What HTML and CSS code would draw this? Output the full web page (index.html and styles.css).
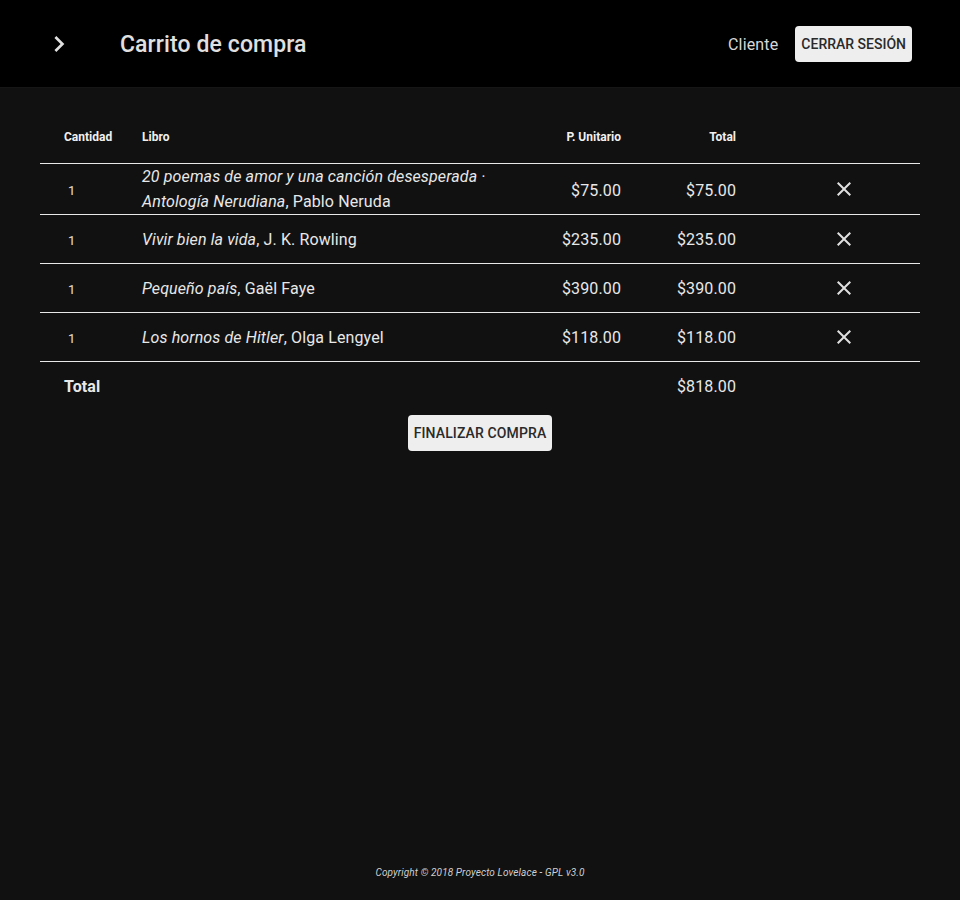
FILE: index.html
```html
<!DOCTYPE html>
<html lang="es">
<head>
<meta charset="utf-8">
<title>Carrito de compra</title>
<link rel="stylesheet" href="styles.css">
</head>
<body>
<header class="appbar">
  <span class="menu-icon">
    <svg viewBox="0 0 24 24" width="32" height="32"><path fill="#e0e0e0" d="M10 6L8.59 7.41 13.17 12l-4.58 4.59L10 18l6-6z"/></svg>
  </span>
  <h1 class="title">Carrito de compra</h1>
  <span class="user">Cliente</span>
  <button class="btn">CERRAR SESIÓN</button>
</header>
<main class="content">
  <table class="cart">
    <colgroup>
      <col class="c-qty"><col class="c-book"><col class="c-unit"><col class="c-total"><col class="c-del">
    </colgroup>
    <thead>
      <tr><th>Cantidad</th><th>Libro</th><th class="num">P. Unitario</th><th class="num">Total</th><th></th></tr>
    </thead>
    <tbody>
      <tr class="first"><td class="qty">1</td><td class="book"><i>20 poemas de amor y una canción desesperada · Antología Nerudiana</i>, Pablo Neruda</td><td class="num">$75.00</td><td class="num">$75.00</td><td class="del"><svg viewBox="0 0 24 24" width="24" height="24"><path fill="#e0e0e0" d="M19 6.41L17.59 5 12 10.59 6.41 5 5 6.41 10.59 12 5 17.59 6.41 19 12 13.41 17.59 19 19 17.59 13.41 12z"/></svg></td></tr>
      <tr><td class="qty">1</td><td class="book"><i>Vivir bien la vida</i>, J. K. Rowling</td><td class="num">$235.00</td><td class="num">$235.00</td><td class="del"><svg viewBox="0 0 24 24" width="24" height="24"><path fill="#e0e0e0" d="M19 6.41L17.59 5 12 10.59 6.41 5 5 6.41 10.59 12 5 17.59 6.41 19 12 13.41 17.59 19 19 17.59 13.41 12z"/></svg></td></tr>
      <tr><td class="qty">1</td><td class="book"><i>Pequeño país</i>, Gaël Faye</td><td class="num">$390.00</td><td class="num">$390.00</td><td class="del"><svg viewBox="0 0 24 24" width="24" height="24"><path fill="#e0e0e0" d="M19 6.41L17.59 5 12 10.59 6.41 5 5 6.41 10.59 12 5 17.59 6.41 19 12 13.41 17.59 19 19 17.59 13.41 12z"/></svg></td></tr>
      <tr><td class="qty">1</td><td class="book"><i>Los hornos de Hitler</i>, Olga Lengyel</td><td class="num">$118.00</td><td class="num">$118.00</td><td class="del"><svg viewBox="0 0 24 24" width="24" height="24"><path fill="#e0e0e0" d="M19 6.41L17.59 5 12 10.59 6.41 5 5 6.41 10.59 12 5 17.59 6.41 19 12 13.41 17.59 19 19 17.59 13.41 12z"/></svg></td></tr>
      <tr class="sum"><td class="sum-label">Total</td><td></td><td></td><td class="num">$818.00</td><td></td></tr>
    </tbody>
  </table>
  <div class="actions"><button class="btn btn-wide">FINALIZAR COMPRA</button></div>
</main>
<footer class="footer">Copyright © 2018 Proyecto Lovelace - GPL v3.0</footer>
</body>
</html>
```
FILE: styles.css
```css
* { box-sizing: border-box; }
html, body { margin: 0; padding: 0; }
body {
  background: #111111;
  color: #e6e6e6;
  font-family: Roboto, "Noto Sans", sans-serif;
  height: 900px;
  display: flex;
  flex-direction: column;
}
.appbar {
  background: #000;
  height: 88px;
  flex: none;
  display: flex;
  align-items: center;
  padding: 1px 48px 0 43px;
  border-bottom: 1px solid #161616;
}
.menu-icon { display: flex; width: 32px; height: 32px; }
.title {
  margin: 0 0 0 45px;
  font-size: 23px;
  font-weight: 500;
  color: #e0e0e0;
  flex: 1;
  letter-spacing: 0.1px;
}
.user { font-size: 16px; color: #d8d8d8; margin-right: 17px; letter-spacing: 0.15px; }
.btn {
  background: #eeeeee;
  color: #2a2a2a;
  border: none;
  border-radius: 4px;
  height: 36px;
  padding: 0 6px;
  font-family: Roboto, sans-serif;
  font-size: 14px;
  font-weight: 500;
}
.btn-wide { letter-spacing: 0.12px; }
.content { padding: 21px 40px 0; flex: 1; }
.cart { width: 880px; border-collapse: collapse; table-layout: fixed; }
.c-qty { width: 78px; }
.c-book { width: 402px; }
.c-unit { width: 125px; }
.c-total { width: 115px; }
.c-del { width: 160px; }
th {
  height: 54px;
  padding: 2px 24px 0;
  font-size: 12px;
  font-weight: 700;
  color: #f0f0f0;
  text-align: left;
  border-bottom: 1px solid #e8e8e8;
}
td {
  height: 49px;
  padding: 2px 24px 0;
  font-size: 16px;
  line-height: 25px;
  letter-spacing: 0.12px;
  color: #e8e8e8;
  border-bottom: 1px solid #e8e8e8;
}
.first td { height: 51px; }
.first .book { padding-top: 0; }
.first .num { padding-top: 4px; }
.num { text-align: right; }
.qty { font-size: 13px; color: #e0e0e0; padding-left: 28px; padding-top: 4px; }
.del { text-align: center; padding: 0 0 0 8px; }
.del svg { display: block; margin: 0 auto; }
.sum td { border-bottom: none; }
.sum-label { font-weight: 700; }
.actions { display: flex; justify-content: center; margin-top: 5px; }
.footer {
  text-align: center;
  font-size: 10px;
  font-style: italic;
  letter-spacing: 0.13px;
  color: #cfcfcf;
  padding-bottom: 22px;
}
```
